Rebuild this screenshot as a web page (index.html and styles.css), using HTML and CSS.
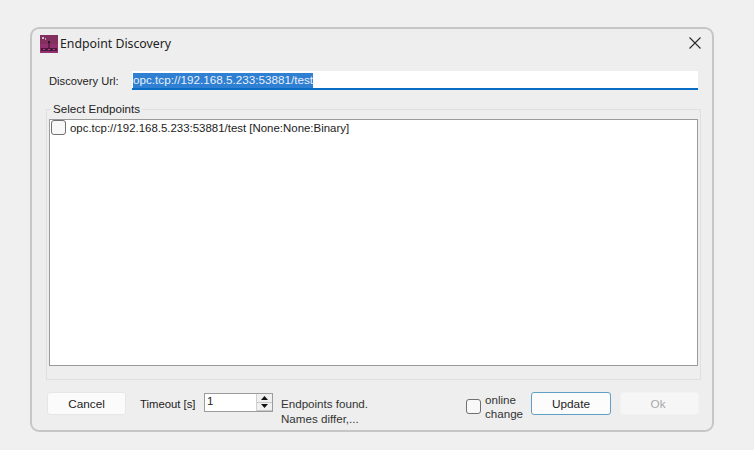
FILE: index.html
```html
<!DOCTYPE html>
<html lang="en">
<head>
<meta charset="utf-8">
<title>Endpoint Discovery</title>
<link rel="stylesheet" href="styles.css">
</head>
<body>
<div class="window">
  <div class="titlebar">
    <svg class="app-icon" width="18" height="18" viewBox="0 0 18 18">
      <rect width="18" height="18" fill="#93306f"/>
      <rect x="0" y="0" width="18" height="9" fill="#83305f"/>
      <rect x="2" y="2" width="2" height="2" fill="#d9b7cc"/>
      <rect x="5" y="3" width="1" height="2" fill="#c99fba"/>
      <rect x="8" y="6" width="2" height="2" fill="#2a1528"/>
      <rect x="8.5" y="8" width="1" height="5" fill="#2a1528"/>
      <rect x="1" y="13" width="16" height="3" fill="#4a1a3c"/>
      <rect x="3" y="14" width="2" height="1" fill="#c43d92"/>
      <rect x="8" y="14" width="2" height="1" fill="#c43d92"/>
      <rect x="13" y="14" width="2" height="1" fill="#c43d92"/>
    </svg>
    <span class="title">Endpoint Discovery</span>
    <svg class="close" width="12" height="12" viewBox="0 0 12 12">
      <path d="M.5.5l11 11M11.5.5l-11 11" stroke="#2b2b2b" stroke-width="1.1" fill="none"/>
    </svg>
  </div>
  <div class="url-row">
    <label class="url-label">Discovery Url:</label>
    <div class="url-input"><span class="selected">opc.tcp://192.168.5.233:53881/test</span></div>
  </div>
  <fieldset class="group">
    <legend class="legend">Select Endpoints</legend>
    <div class="list">
      <div class="list-item">
        <span class="check"></span>
        <span class="item-text">opc.tcp://192.168.5.233:53881/test [None:None:Binary]</span>
      </div>
    </div>
  </fieldset>
  <div class="footer">
    <button class="btn cancel">Cancel</button>
    <span class="timeout-label">Timeout [s]</span>
    <div class="spin">
      <span class="spin-value">1</span>
      <div class="spin-btns">
        <span class="spin-btn"><svg width="7" height="4" viewBox="0 0 7 4"><path d="M3.5 0L7 4H0z" fill="#111"/></svg></span>
        <span class="spin-btn"><svg width="7" height="4" viewBox="0 0 7 4"><path d="M0 0h7L3.5 4z" fill="#111"/></svg></span>
      </div>
    </div>
    <div class="status">Endpoints found.<br>Names differ,...</div>
    <span class="check online-check"></span>
    <div class="online-label">online<br>change</div>
    <button class="btn update">Update</button>
    <button class="btn ok" disabled>Ok</button>
  </div>
</div>
</body>
</html>
```
FILE: styles.css
```css
* { box-sizing: border-box; }
html, body { margin: 0; height: 100%; }
body {
  background: #f0f0f0;
  padding: 27px 0 0 30px;
  font-family: "Liberation Sans", Arial, sans-serif;
  font-size: 11.6px;
  color: #1c1c1c;
  overflow: hidden;
}
.window {
  width: 684px;
  height: 405px;
  border: 2px solid #c6c6c6;
  border-radius: 9px;
  background: #eeeeee;
  padding: 0 14px 0 14px;
}
.titlebar {
  display: flex;
  align-items: center;
  height: 29px;
  margin-left: -6px;
  margin-right: -14px;
}
.app-icon { flex: none; }
.title {
  margin-left: 2px;
  font-family: "Noto Sans", "Open Sans", sans-serif;
  font-size: 12.3px;
  color: #222;
}
.close { margin-left: auto; margin-right: 11px; margin-top: -2px; }
.url-row {
  display: flex;
  align-items: center;
  margin-top: 13px;
  margin-left: 3px;
  width: 649px;
  height: 19px;
}
.url-label { width: 83px; flex: none; font-size: 11.2px; }
.url-input {
  flex: 1;
  height: 19px;
  background: #fff;
  border-bottom: 2px solid #0a6cc4;
  padding: 2px 0 0 1px;
  line-height: 14px;
  font-size: 11.7px;
}
.selected {
  display: inline-block;
  height: 15px;
  background: #2f7fd2;
  color: #e8f1fb;
  padding-right: 0;
}
.group {
  margin: 12px 0 0 0;
  padding: 3px 2px 2px 2px;
  width: 655px;
  height: 278px;
  border: 1px solid #e0e0e0;
  min-width: 0;
}
.legend {
  padding: 0 2px;
  margin-left: 2px;
  height: 14px;
  line-height: 14px;
  color: #222;
}
.list {
  height: 247px;
  background: #fff;
  border: 1px solid #9a9a9a;
  padding: 0 0 0 1px;
}
.list-item {
  display: flex;
  align-items: center;
  height: 15px;
  gap: 4px;
}
.item-text { font-size: 11.45px; }
.check {
  flex: none;
  display: block;
  width: 15px;
  height: 15px;
  border: 1px solid #707070;
  border-radius: 3px;
  background: #f8f8f8;
}
.footer {
  display: flex;
  align-items: flex-start;
  margin-top: 12px;
  margin-left: 1px;
  width: 652px;
  height: 36px;
}
.btn {
  flex: none;
  font: inherit;
  font-size: 11.8px;
  width: 79px;
  height: 23px;
  border: 1px solid #e6e6e6;
  border-radius: 3px;
  background: #fbfbfb;
  color: #1c1c1c;
  padding: 0;
}
.timeout-label { margin: 6px 0 0 14px; width: 64px; flex: none; font-size: 11.3px; }
.spin {
  display: flex;
  flex: none;
  width: 69px;
  height: 19px;
  margin-top: 1px;
  border: 1px solid #9c9c9c;
  background: #fff;
}
.spin-value { flex: 1; padding-left: 2px; line-height: 13px; }
.spin-btns {
  width: 16px;
  display: flex;
  flex-direction: column;
  background: #f0f0f0;
  border-left: 1px solid #d0d0d0;
}
.spin-btn {
  flex: 1;
  display: flex;
  align-items: center;
  justify-content: center;
  border-bottom: 1px solid #c8c8c8;
}
.status {
  flex: none;
  width: 185px;
  margin: 4px 0 0 8px;
  line-height: 15px;
  color: #333;
}
.online-check { margin-top: 7px; }
.online-label {
  flex: none;
  width: 45px;
  margin: 1px 0 0 4px;
  line-height: 14px;
  color: #333;
}
.update {
  width: 80px;
  border-color: #5f9fc4;
  background: #fcfcfc;
  margin-left: 1px;
}
.ok {
  width: 79px;
  margin-left: 9px;
  background: #f6f6f6;
  border-color: #f2f2f2;
  color: #a8a8a8;
  padding-right: 3px;
}
```
